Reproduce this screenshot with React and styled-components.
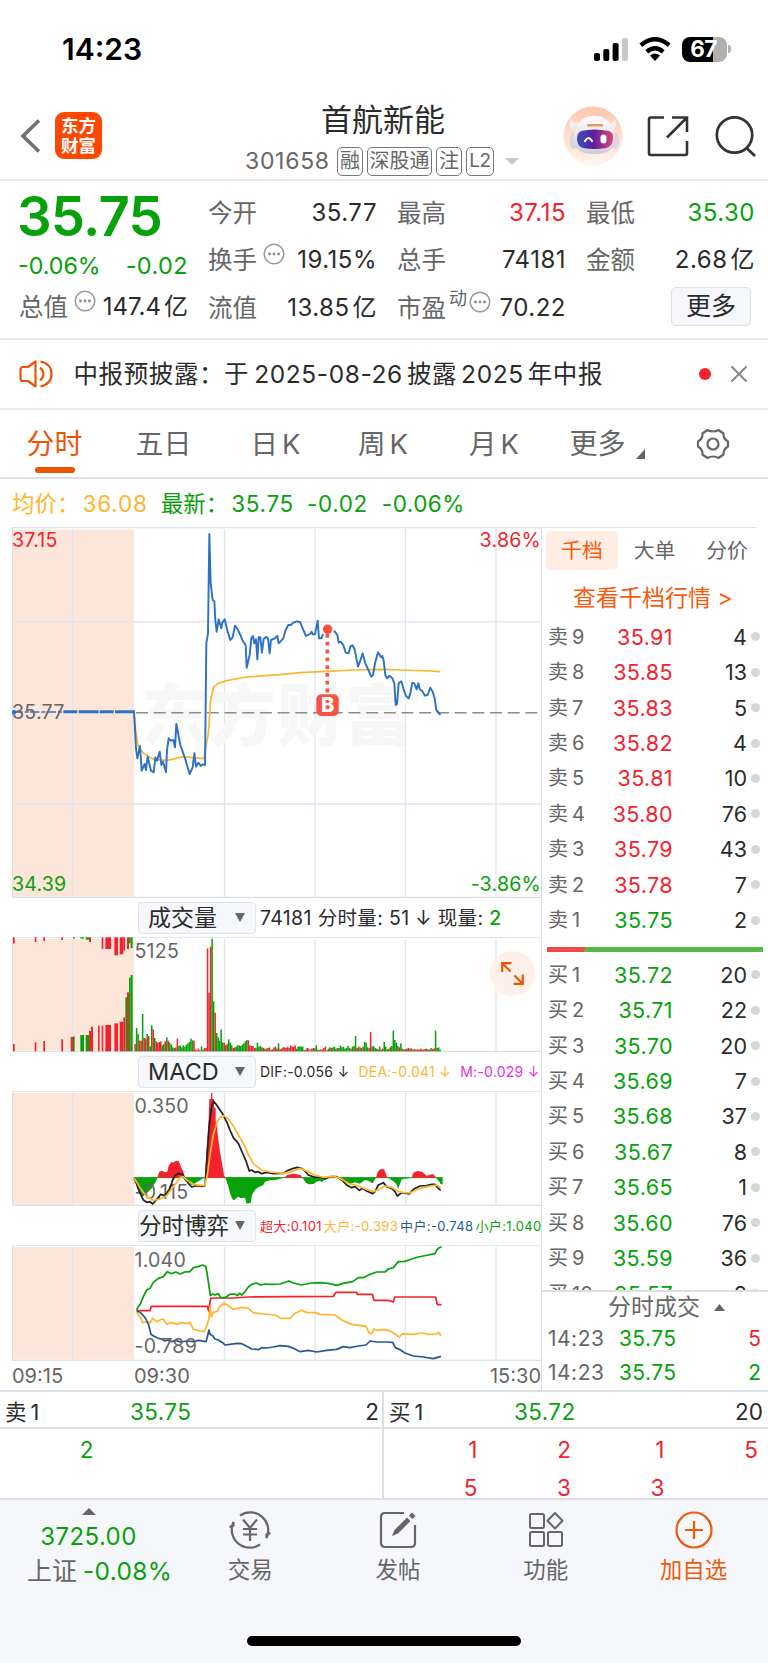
import React from "react";
import styled, { createGlobalStyle } from "styled-components";

const C = {
  red: "#f5222d",
  green: "#07a10b",
  orange: "#ea5504",
  amber: "#ffb52e",
  blue: "#2f72c4",
  navy: "#2b5797",
  text: "#2b2b2b",
  grey: "#666",
  line: "#dcdfe6",
  pink: "#fce6da",
};

const Global = createGlobalStyle`
  * { box-sizing: border-box; }
  body { margin: 0; background: #fff; color: ${C.text};
    font-family: Inter, "Noto Sans CJK SC", sans-serif; }
  svg { display: block; flex: none; }
`;

const Page = styled.div`
  width: 768px;
  height: 1663px;
  overflow: hidden;
  display: flex;
  flex-direction: column;
  background: #fff;
`;

const T = styled.span`
  font-size: ${(p) => p.$s || 24}px;
  line-height: ${(p) => p.$lh || 30}px;
  letter-spacing: ${(p) => p.$ls || 0}px;
  font-weight: ${(p) => p.$w || 400};
  color: ${(p) => p.$c || "inherit"};
  white-space: nowrap;
`;

const Num = styled.span`
  margin-left: ${(p) => p.$l ?? 5}px;
  margin-right: ${(p) => p.$r ?? 0}px;
`;

/* ---------- status bar and title ---------- */

const StatusBar = styled.div`
  height: 98px;
  flex: none;
  display: flex;
  align-items: center;
  justify-content: space-between;
  padding: 0 37px 0 62px;
`;

const StatusIcons = styled.div`
  display: flex;
  align-items: center;
  gap: 11px;
`;

const Battery = styled.div`
  display: flex;
  align-items: center;
  gap: 1px;
`;

const BatteryBody = styled.div`
  width: 45px;
  height: 25px;
  border-radius: 8px;
  background: linear-gradient(90deg, #000 68%, #b0b0b0 68%);
  color: #fff;
  display: flex;
  align-items: center;
  justify-content: center;
  padding-right: 2px;
`;

const BatteryTip = styled.div`
  width: 3px;
  height: 8px;
  border-radius: 0 4px 4px 0;
  background: #b0b0b0;
`;

const Header = styled.header`
  height: 83px;
  flex: none;
  border-bottom: 2px solid #ececef;
  display: grid;
  grid-template-columns: 245px 275px 248px;
`;

const HeaderLeft = styled.div`
  display: flex;
  align-items: center;
  padding: 0 0 6px 20px;
  gap: 14px;
`;

const AppLogo = styled.div`
  width: 47px;
  height: 47px;
  border-radius: 9px;
  background: #ff4700;
  color: #fff;
  display: flex;
  flex-direction: column;
  align-items: center;
  justify-content: center;
`;

const HeaderTitle = styled.div`
  display: flex;
  flex-direction: column;
  padding-top: 3px;
`;

const StockName = styled.div`
  height: 38px;
  display: flex;
  align-items: center;
  padding-left: 76px;
`;

const CodeRow = styled.div`
  display: flex;
  align-items: center;
  height: 40px;
  padding-top: 4px;
  gap: 4px;
`;

const Code = styled.div`
  width: 88px;
  flex: none;
`;

const Tag = styled.span`
  height: 29px;
  width: ${(p) => p.$width}px;
  flex: none;
  border: 1.5px solid #777;
  border-radius: 5px;
  color: #666;
  display: flex;
  align-items: center;
  justify-content: center;
`;

const HeaderRight = styled.div`
  display: flex;
  align-items: center;
  padding: 0 0 6px 43px;
`;

/* ---------- quote ---------- */

const Quote = styled.section`
  height: 159px;
  flex: none;
  border-bottom: 2px solid #e8e8ec;
  display: flex;
  padding-left: 19px;
`;

const PriceBlock = styled.div`
  width: 169px;
  flex: none;
  margin-right: 20px;
  display: flex;
  flex-direction: column;
`;

const BigPrice = styled.div`
  height: 69px;
  padding-top: 5px;
  margin-left: -2px;
`;

const ChangeRow = styled.div`
  height: 33px;
  display: flex;
  justify-content: space-between;
  align-items: center;
  padding-bottom: 2px;
  margin-left: -1px;
`;

const StatColumn = styled.div`
  width: 169px;
  flex: none;
  margin-right: 20px;
  padding-top: 8px;
  display: flex;
  flex-direction: column;
`;

const Stat = styled.div`
  height: ${(p) => p.$h || 47.5}px;
  display: flex;
  align-items: center;
  justify-content: space-between;
`;

const StatLabel = styled.span`
  display: flex;
  align-items: center;
  color: ${C.grey};
`;

const InfoMark = styled.svg`
  margin: 0 0 12px ${(p) => p.$l ?? 6}px;
`;

const Superscript = styled.span`
  font-size: 18px;
  line-height: 20px;
  margin: 0 0 17px 3px;
`;

const MoreButton = styled.button`
  width: 80px;
  height: 39px;
  margin: 0 4px 0 auto;
  padding: 0;
  border: 1.5px solid #dfe1e8;
  border-radius: 5px;
  background: #f6f7fa;
  color: ${C.text};
  font-family: inherit;
`;

/* ---------- notice and tabs ---------- */

const Notice = styled.section`
  height: 70px;
  flex: none;
  border-bottom: 2px solid #ececef;
  display: flex;
  align-items: center;
  padding: 0 20px 1px 19px;
`;

const NoticeText = styled.div`
  flex: 1;
  padding-left: 20.5px;
`;

const RedDot = styled.span`
  width: 12px;
  height: 12px;
  border-radius: 50%;
  background: ${C.red};
  margin-right: 19px;
`;

const Tabs = styled.nav`
  height: 69px;
  flex: none;
  border-bottom: 2px solid ${C.line};
  display: flex;
  align-items: center;
`;

const Tab = styled.div`
  position: relative;
  height: 67px;
  display: flex;
  align-items: center;
  justify-content: center;
  width: ${(p) => p.$width}px;
  color: ${(p) => (p.$active ? C.orange : C.grey)};
  &::after {
    content: "";
    display: ${(p) => (p.$active ? "block" : "none")};
    position: absolute;
    left: 35px;
    bottom: 4px;
    width: 40px;
    height: 6px;
    border-radius: 3px;
    background: ${C.orange};
  }
`;

const CornerMark = styled.svg`
  margin: 20px 0 0 10px;
`;

const AverageLine = styled.div`
  height: 48px;
  flex: none;
  display: flex;
  align-items: center;
  padding: 1px 0 0 12px;
`;

/* ---------- charts ---------- */

const Main = styled.section`
  height: 865px;
  flex: none;
  display: grid;
  grid-template-columns: 542px 226px;
  border-bottom: 2px solid ${C.line};
`;

const ChartColumn = styled.div`
  padding-left: 12px;
  border-right: 1.5px solid ${C.line};
  display: flex;
  flex-direction: column;
`;

const IndicatorBar = styled.div`
  height: 39px;
  flex: none;
  padding-left: 126px;
  display: flex;
  align-items: center;
`;

const Select = styled.div`
  width: 118px;
  height: 32px;
  flex: none;
  border: 1.5px solid #e0e2e9;
  border-radius: 4px;
  background: #f6f7fa;
  display: flex;
  align-items: center;
  justify-content: space-between;
  padding: 0 10px 0 ${(p) => p.$pad ?? 8}px;
  margin-right: 4px;
`;

const Values = styled.div`
  display: flex;
  align-items: center;
  gap: ${(p) => p.$gap || 0}px;
`;

const ChartFrame = styled.div`
  position: relative;
  height: ${(p) => p.$h}px;
  flex: none;
`;

const ExpandButton = styled.div`
  position: absolute;
  left: 478px;
  top: 13.5px;
  width: 45px;
  height: 45px;
  border-radius: 50%;
  background: #fff0e9;
  display: flex;
  align-items: center;
  justify-content: center;
`;

const TimeAxis = styled.div`
  flex: 1;
  display: grid;
  grid-template-columns: 122px 1fr auto;
  align-items: center;
  color: ${C.grey};
`;

/* ---------- order book ---------- */

const Book = styled.aside`
  display: flex;
  flex-direction: column;
`;

const BookTabs = styled.div`
  height: 49px;
  flex: none;
  margin-right: 12px;
  border-top: 1.5px solid ${C.line};
  display: flex;
  padding: 3px 0 0 4px;
`;

const BookTab = styled.div`
  width: ${(p) => p.$width}px;
  height: 39px;
  flex: none;
  border-radius: 5px;
  display: flex;
  align-items: center;
  justify-content: center;
  background: ${(p) => (p.$active ? "#ffede4" : "transparent")};
  color: ${(p) => (p.$active ? "#fb5a0b" : C.grey)};
`;

const DepthLink = styled.div`
  height: 43px;
  flex: none;
  display: flex;
  align-items: center;
  padding-left: 31px;
  color: #fb5a0b;
`;

const Levels = styled.div`
  height: ${(p) => p.$h}px;
  flex: none;
  overflow: hidden;
`;

const Level = styled.div`
  height: 35.45px;
  display: grid;
  grid-template-columns: 54px 67px 1fr 9px;
  column-gap: 4px;
  align-items: center;
  padding: 0 8px 0 6px;
`;

const Right = styled.span`
  text-align: right;
  display: flex;
  justify-content: flex-end;
`;

const Dot = styled.span`
  width: 9px;
  height: 9px;
  border-radius: 50%;
  background: #d3d6dd;
`;

const RatioBar = styled.div`
  height: 5px;
  flex: none;
  margin: 0 5px 5px 5px;
  background: linear-gradient(120deg, #ee4a4a 34px, #57b946 34px);
`;

const TradesTitle = styled.div`
  height: 32px;
  flex: none;
  border-top: 2px solid ${C.line};
  display: flex;
  align-items: center;
  padding-left: 66px;
  gap: 14px;
  color: ${C.grey};
`;

const Trade = styled.div`
  height: 34px;
  flex: none;
  display: grid;
  grid-template-columns: 71px 71px 1fr;
  padding: 0 7px 0 6px;
  align-items: center;
`;

/* ---------- queue ---------- */

const BestRow = styled.div`
  height: 37px;
  flex: none;
  display: grid;
  grid-template-columns: 384px 384px;
  border-bottom: 2px solid ${C.line};
`;

const Best = styled.div`
  display: grid;
  grid-template-columns: 125px 1fr auto;
  align-items: center;
  padding: 4px ${(p) => (p.$last ? 5 : 3)}px 0 5px;
  border-right: ${(p) => (p.$last ? "0" : `2px solid ${C.line}`)};
`;

const Queue = styled.div`
  height: 71px;
  flex: none;
  display: grid;
  grid-template-columns: 384px 384px;
  border-bottom: 2px solid ${C.line};
`;

const QueueSide = styled.div`
  display: grid;
  grid-template-columns: repeat(4, 93.5px);
  grid-template-rows: 38px 38px;
  align-items: center;
  padding-top: 2px;
  border-right: ${(p) => (p.$last ? "0" : `2px solid ${C.line}`)};
  overflow: hidden;
  text-align: right;
`;

/* ---------- bottom bar ---------- */

const BottomBar = styled.footer`
  flex: 1;
  background: #f6f7fa;
  display: flex;
  flex-direction: column;
  align-items: center;
`;

const BottomItems = styled.div`
  width: 768px;
  height: 136px;
  display: grid;
  grid-template-columns: 177px repeat(4, 147.75px);
`;

const IndexCell = styled.div`
  display: flex;
  flex-direction: column;
  align-items: center;
  padding-top: 8px;
`;

const IndexValue = styled.div`
  height: 38px;
  margin-top: 3px;
  display: flex;
  align-items: center;
`;

const IndexChange = styled.div`
  display: flex;
  align-items: center;
  gap: 6px;
  padding-left: 22px;
`;

const Action = styled.div`
  display: flex;
  flex-direction: column;
  align-items: center;
  padding: 8px 1px 0 0;
  gap: 3px;
  color: ${(p) => (p.$hot ? "#f05a0a" : C.grey)};
`;

const HomeIndicator = styled.div`
  width: 274px;
  height: 10px;
  border-radius: 5px;
  background: #000;
`;

/* ---------- chart data, in thirds of a pixel ---------- */

const PRICE =
  "402,574 404,610 408,685 412,715 420,678 425,752 434,732 438,750 443,710 453,752 461,757 466,712 471,722 479,695 484,735 489,725 498,757 501,690 506,655 512,662 520,660 525,682 529,612 541,675 555,715 569,762 578,742 583,700 588,740 595,728 602,738 608,733 615,735 619,370 624,340 628,42 632,190 638,240 643,243 646,300 650,335 656,298 664,325 667,308 674,298 683,335 691,360 698,352 705,317 714,330 721,345 728,362 737,375 740,443 749,405 754,355 759,348 763,370 768,358 772,418 776,352 781,352 786,398 791,357 799,350 804,355 809,400 813,360 824,355 832,348 836,370 850,355 857,330 865,315 872,315 880,308 890,304 900,306 908,325 918,348 930,342 935,335 938,343 945,343 953,302 957,355 964,355 969,342";
const PRICE_AFTER =
  "1002,332 1012,345 1016,368 1022,365 1030,375 1037,398 1046,400 1051,380 1057,376 1064,388 1074,440 1080,425 1088,400 1096,430 1105,450 1114,470 1119,465 1125,430 1134,397 1143,412 1147,408 1151,422 1156,465 1161,475 1168,467 1177,475 1183,490 1187,555 1191,552 1196,490 1204,484 1210,505 1218,528 1226,535 1231,520 1237,488 1243,490 1250,508 1255,490 1259,507 1266,512 1275,527 1283,525 1291,503 1298,515 1304,535 1309,570 1316,578 1321,585";
const AVERAGE =
  "402,580 408,640 414,678 430,700 460,718 500,721 525,716 550,710 580,713 612,716 618,680 625,640 632,540 640,502 655,490 680,482 740,471 840,464 900,458 980,454 1060,450 1150,448 1200,450 1290,453 1321,455";

const VOLUME =
  "r22 g70 g52 r32 r32 g112 r40 r38 g52 r46 g15 g78 r66 g40 r30 r26 r28 r30 g18 g22 r30 g42 r32 g26 g20 g12 r10 g12 r38 g16 g18 g12 g18 g14 g20 g24 g28 g38 g33 r32 r6 r3 r8 g3 g15 g5 r10 r10 r309 r176 r314 g338 g150 r116 g55 g42 g32 g66 g26 r26 g18 r22 g36 g26 g18 r10 r12 g14 g18 g18 g16 g20 g24 g30 g34 r33 r18 r16 r16 r10 g10 g26 g14 g16 g12 r10 r8 g8 r10 r12 g5 g6 r12 r14 g8 g24 r6 r8 r12 r12 r10 r14 g10 r18 r14 r14 r18 g8 g14 g15 g14 g14 r4 g5 r10 r8 g3 r8 r10 g9 g18 r5 g4 r6 r5 r10 r14 g3 g8 g12 r10 g12 g14 g8 r10 g10 g18 g12 g14 g8 g10 g16 g10 r8 g14 g16 g46 r10 r14 g12 g10 r14 g28 g26 g12 r10 r58 g14 g16 g10 r8 g6 g14 r5 r8 g28 g14 g6 g8 r12 g16 g62 g34 g26 g16 r12 g24 g8 r6 g6 r8 r10 g8 r9 r5 g7 r5 r6 g5 r8 r6 r5 g7 r8 r6 g5 g10 r7 r9 g62 g10 g12 g5"
    .split(" ")
    .map((v) => ({ up: v[0] === "r", h: Number(v.slice(1)) }));

/* [x, width, height from the base, hanging height, rising] */
const AUCTION = [
  [39, 5, 22, 19, 1], [104, 5, 27, 14, 1], [130, 5, 31, 11, 1], [184, 5, 36, 8, 1],
  [212, 7, 43, 0, 1], [219, 5, 45, 4, 0], [241, 11, 49, 4, 0], [257, 10, 49, 7, 0],
  [267, 6, 61, 14, 1], [273, 6, 74, 0, 1], [294, 5, 77, 0, 1], [305, 5, 77, 35, 1],
  [316, 17, 79, 35, 1], [343, 11, 84, 54, 1], [359, 11, 89, 51, 1], [370, 5, 102, 40, 1],
  [376, 5, 162, 0, 0], [381, 6, 177, 35, 1], [387, 5, 221, 18, 0], [392, 6, 229, 33, 0],
];

const MACD_UP = [
  "472,158 478,140 485,137 495,142 502,140 506,122 515,110 520,113 528,107 536,108 543,125 550,140 555,158",
  "614,158 618,100 622,40 626,-20 628,-78 633,-78 633,-96 637,-96 637,-78 642,-78 642,-52 647,-52 647,-8 651,-8 652,20 656,50 660,80 666,115 672,150 676,158",
  "852,158 862,150 880,146 900,149 908,158",
  "1128,158 1133,142 1140,133 1152,133 1157,145 1162,158",
  "1235,158 1240,143 1252,138 1266,140 1280,152 1298,147 1310,158",
];
const MACD_DOWN = [
  "402,158 410,180 418,200 428,215 440,205 455,190 470,165 472,158",
  "555,158 565,172 575,180 590,172 605,163 612,158",
  "676,158 684,180 690,205 697,222 702,226 710,218 716,215 722,220 735,218 740,236 752,234 756,210 765,195 772,188 790,180 795,170 810,166 830,164 850,158",
  "908,158 916,172 925,178 940,177 950,170 960,167 965,172 975,163 985,158",
  "1020,158 1035,170 1050,178 1065,172 1080,176 1095,165 1105,167 1118,175 1125,162 1128,158",
  "1165,158 1182,170 1190,178 1194,192 1199,180 1205,163 1235,158",
  "1308,158 1318,170 1322,178 1328,178 1328,158",
];
const DIF =
  "402,158 408,172 418,200 430,225 440,232 450,230 458,237 466,228 475,218 482,208 492,212 500,205 510,190 518,165 525,152 535,145 548,148 555,162 565,175 575,186 590,182 605,184 614,183 617,160 622,80 628,0 634,-50 641,-71 650,-60 660,-45 670,-30 682,-5 690,15 700,38 715,55 725,78 738,108 748,138 755,135 765,142 775,140 785,146 800,142 820,146 840,145 852,145 860,138 880,130 892,127 905,130 915,138 925,150 945,157 960,156 975,162 990,155 1010,155 1025,165 1040,180 1055,188 1065,185 1078,196 1088,190 1100,198 1118,206 1125,200 1135,180 1150,173 1160,185 1175,190 1185,200 1192,213 1205,203 1228,207 1240,193 1260,183 1280,182 1295,178 1305,178 1315,190 1322,196";
const DEA =
  "402,158 420,188 440,215 460,226 480,222 500,212 520,185 540,158 550,155 560,165 580,178 600,181 614,181 622,150 630,90 640,30 650,-5 660,-23 672,-28 685,-18 700,3 715,30 735,65 748,95 762,118 785,135 810,141 850,145 875,140 900,130 925,140 945,150 970,157 1000,154 1020,160 1045,175 1075,183 1100,193 1120,200 1140,192 1155,183 1175,187 1195,200 1210,203 1230,204 1260,190 1285,184 1310,180 1322,188";

const FLOWS = [
  [C.red, "410,557 450,557 454,544 622,544 626,558 632,520 640,519 700,519 745,516 1000,514 1008,502 1070,502 1072,508 1117,508 1122,526 1165,526 1180,531 1184,516 1307,516 1312,539 1325,539"],
  [C.amber, "410,560 416,572 422,578 428,594 440,590 450,594 458,580 470,590 480,585 490,582 500,598 515,592 530,598 545,592 560,596 570,592 580,613 600,618 612,620 620,605 627,580 630,545 634,575 640,562 650,560 660,545 673,534 685,543 700,553 725,547 745,550 760,563 790,567 825,570 842,580 870,580 885,565 905,556 920,562 945,563 960,568 1005,570 1025,585 1055,598 1098,604 1108,625 1115,626 1122,612 1130,616 1155,614 1175,620 1198,636 1208,626 1240,628 1265,624 1285,628 1310,627 1315,622 1323,632"],
  [C.navy, "410,557 420,562 430,572 438,582 446,600 453,628 462,634 475,640 485,642 495,648 505,645 515,650 528,646 540,651 560,648 580,650 595,646 618,650 622,635 627,615 630,628 638,632 645,642 655,645 668,653 675,660 690,658 710,655 725,656 740,664 755,672 775,674 785,668 800,669 820,666 840,662 865,664 885,672 900,680 925,676 950,681 980,676 1010,673 1030,665 1050,668 1075,663 1098,660 1110,648 1130,651 1155,651 1178,652 1186,668 1200,674 1215,684 1240,693 1270,696 1300,701 1323,694"],
  [C.green, "410,555 415,545 422,535 430,515 440,495 450,490 460,472 475,460 490,455 502,440 515,446 528,441 540,447 555,441 570,440 580,428 595,425 608,420 617,424 622,450 628,490 631,512 638,507 645,510 655,506 662,518 675,518 690,508 705,507 712,512 718,505 726,510 735,500 745,486 755,478 770,474 782,480 795,477 815,478 840,477 867,468 880,474 905,480 935,474 960,473 985,475 1010,481 1030,475 1058,470 1075,458 1090,458 1110,448 1130,441 1155,441 1165,432 1180,428 1195,410 1215,409 1235,402 1255,396 1285,390 1305,386 1310,375 1318,368 1325,366"],
];

function Grid({ top, bottom }) {
  return (
    <g>
      <rect x="12" y={top + 2.5} width="122" height={bottom - top - 4} fill={C.pink} />
      <path
        d={`M72.7 ${top + 2}V${bottom}M224.5 ${top + 2}V${bottom}M315 ${top + 2}V${bottom}M405.5 ${top + 2}V${bottom}M496 ${top + 2}V${bottom}`}
        stroke="#e1e5ee"
        strokeWidth="1.3"
      />
      <path d={`M12.5 ${bottom - 0.7}V${top + 0.7}H542M12.5 ${bottom - 0.7}H542`} fill="none" stroke={C.line} strokeWidth="1.3" />
    </g>
  );
}

const Line = ({ points, color, w = 5.2 }) => (
  <polyline points={points} fill="none" stroke={color} strokeWidth={w} strokeLinejoin="round" />
);

const ChartText = styled.text`
  font-size: 19.6px;
  letter-spacing: 0.2px;
`;

function PriceChart() {
  return (
    <ChartFrame $h={371}>
      <svg width="530" height="371" viewBox="12 527 530 371">
        <Grid top={527} bottom={898} />
        <path d="M12 621.7H542M12 804H542" stroke="#e1e5ee" strokeWidth="1.5" />
        <text x="141" y="740" fontSize="67" fontWeight="900" letterSpacing="1" fill="#f7f7f7">东方财富</text>
        <path d="M136 712.7H541" stroke="#8c8c8c" strokeWidth="1.6" strokeDasharray="12 5.7" />
        <g transform="translate(0 520) scale(.33333)">
          <circle cx="42" cy="577" r="7" fill={C.blue} />
          <path d="M40 576H190" stroke={C.blue} strokeWidth="5" strokeDasharray="28 6 12 4" />
          <path d="M190 575H404" stroke={C.blue} strokeWidth="9" strokeDasharray="42 4 60 3" />
          <Line points={AVERAGE} color={C.amber} />
          <Line points={PRICE} color={C.blue} w={5.8} />
          <Line points={PRICE_AFTER} color={C.blue} w={5.8} />
        </g>
        <path d="M327.3 634V694" stroke="#fa5343" strokeWidth="3.6" strokeDasharray="3.8 4" />
        <circle cx="327.6" cy="629.3" r="4.7" fill="#fa4a3c" />
        <rect x="316.3" y="694.3" width="22.4" height="21.6" rx="5" fill="#fa5343" />
        <text x="327.6" y="712.3" fontSize="20" fontWeight="800" fill="#fff" textAnchor="middle">B</text>
        <ChartText x="12" y="547.3" fill={C.red}>37.15</ChartText>
        <ChartText x="12" y="719.3" fill={C.grey}>35.77</ChartText>
        <ChartText x="12" y="890.7" fill={C.green}>34.39</ChartText>
        <ChartText x="541" y="547.3" fill={C.red} textAnchor="end">3.86%</ChartText>
        <ChartText x="541" y="890.7" fill={C.green} textAnchor="end">-3.86%</ChartText>
      </svg>
    </ChartFrame>
  );
}

function VolumeChart() {
  return (
    <ChartFrame $h={115}>
      <svg width="530" height="115" viewBox="12 937 530 115">
        <Grid top={936.5} bottom={1052} />
        <g transform="translate(0 895) scale(.33333)">
          {AUCTION.map(([x, w, h, top, up]) => (
            <g key={x} fill={up ? C.red : C.green}>
              <rect x={x} y={469 - h} width={w} height={h} />
              <rect x={x} y={127} width={w} height={top} />
            </g>
          ))}
          {VOLUME.map((v, i) => (
            <rect key={i} x={403 + i * 4.53} y={469 - v.h} width="4.6" height={v.h} fill={v.up ? C.red : C.green} />
          ))}
        </g>
        <ChartText x="134.5" y="958.3" fill={C.grey}>5125</ChartText>
      </svg>
      <ExpandButton>
        <svg width="23" height="23" viewBox="0 0 23 23" fill="none" stroke={C.orange} strokeWidth="2.2">
          <path d="M1.200 10V1.200H10.500M1.500 1.500L9.500 9.500M21.800 12.500V21.800H12.500M21.500 21.500L13.500 13.500" />
        </svg>
      </ExpandButton>
    </ChartFrame>
  );
}

function MacdChart() {
  return (
    <ChartFrame $h={115}>
      <svg width="530" height="115" viewBox="12 1091 530 115">
        <Grid top={1090.5} bottom={1206} />
        <g transform="translate(0 1125) scale(.33333)">
          <path d="M402 158H1328" stroke={C.green} strokeWidth="3" />
          {MACD_UP.map((p) => <polygon key={p} points={p} fill={C.red} />)}
          {MACD_DOWN.map((p) => <polygon key={p} points={p} fill={C.green} />)}
        </g>
        <ChartText x="134.5" y="1112.5" fill={C.grey}>0.350</ChartText>
        <ChartText x="134.5" y="1198.5" fill={C.grey}>-0.115</ChartText>
        <g transform="translate(0 1125) scale(.33333)">
          <Line points={DIF} color="#222" />
          <Line points={DEA} color={C.amber} />
        </g>
      </svg>
    </ChartFrame>
  );
}

function FlowChart() {
  return (
    <ChartFrame $h={116}>
      <svg width="530" height="116" viewBox="12 1245 530 116">
        <Grid top={1244.5} bottom={1361} />
        <g transform="translate(0 1125) scale(.33333)">
          {FLOWS.map(([color, points]) => <Line key={color} points={points} color={color} />)}
        </g>
        <ChartText x="134.5" y="1266.5" fill={C.grey}>1.040</ChartText>
        <ChartText x="134.5" y="1353.3" fill={C.grey}>-0.789</ChartText>
      </svg>
    </ChartFrame>
  );
}

const Caret = ({ up, w = 10, h = 9, color = C.grey }) => (
  <svg width={w} height={h} viewBox="0 0 10 10" preserveAspectRatio="none">
    <path d={up ? "M5 0L10 10H0Z" : "M0 0H10L5 10Z"} fill={color} />
  </svg>
);

const Info = ({ l }) => (
  <InfoMark $l={l} width="22" height="22" viewBox="0 0 22 22">
    <circle cx="11" cy="11" r="9.8" fill="none" stroke="#999" strokeWidth="1.5" />
    <g fill="#888">
      <circle cx="6.5" cy="11" r="1.4" />
      <circle cx="11" cy="11" r="1.4" />
      <circle cx="15.5" cy="11" r="1.4" />
    </g>
  </InfoMark>
);

const SELLS = [
  ["9", "35.91", "4"], ["8", "35.85", "13"], ["7", "35.83", "5"], ["6", "35.82", "4"], ["5", "35.81", "10"],
  ["4", "35.80", "76"], ["3", "35.79", "43"], ["2", "35.78", "7"], ["1", "35.75", "2"],
];
const BUYS = [
  ["1", "35.72", "20"], ["2", "35.71", "22"], ["3", "35.70", "20"], ["4", "35.69", "7"], ["5", "35.68", "37"],
  ["6", "35.67", "8"], ["7", "35.65", "1"], ["8", "35.60", "76"], ["9", "35.59", "36"], ["10", "35.57", "8"],
];

function LevelRow({ side, row: [n, price, qty] }) {
  const up = Number(price) > 35.77;
  return (
    <Level>
      <T $s={20} $c={C.grey}>{side}<Num $l={4}>{n}</Num></T>
      <Right><T $s={21.5} $ls={0.4} $c={up ? C.red : C.green}>{price}</T></Right>
      <Right><T $s={21.5}>{qty}</T></Right>
      <Dot />
    </Level>
  );
}

function StatItem({ label, mark, extra, value, color, ls = 0.5 }) {
  return (
    <Stat>
      <StatLabel>
        <T $s={24.5}>{label}</T>
        {extra && <Superscript>{extra}</Superscript>}
        {mark && <Info l={extra ? 2 : 6} />}
      </StatLabel>
      <T $s={24} $ls={ls} $c={color}>{value}</T>
    </Stat>
  );
}

const Robot = () => (
  <svg width="60" height="60" viewBox="0 0 60 60">
    <defs>
      <linearGradient id="halo" x1="0" y1="0" x2="0" y2="1">
        <stop offset="0" stopColor="#fdc7ae" />
        <stop offset="1" stopColor="#fff5ef" />
      </linearGradient>
      <linearGradient id="visor" x1="0" y1="0" x2="1" y2="0">
        <stop offset="0" stopColor="#3a4fc0" />
        <stop offset=".45" stopColor="#5a1f9c" />
        <stop offset="1" stopColor="#e0457a" />
      </linearGradient>
      <linearGradient id="shell" x1="0" y1="0" x2="0" y2="1">
        <stop offset="0" stopColor="#fff" />
        <stop offset="1" stopColor="#cfcdd6" />
      </linearGradient>
    </defs>
    <circle cx="30" cy="30" r="29.5" fill="url(#halo)" />
    <path d="M9 24Q5 19 8 13Q11 17 17 17ZM50 24Q55 20 52 14Q49 18 43 18Z" fill="#f1eef1" />
    <ellipse cx="11" cy="35" rx="4.500" ry="8" fill="#d9d6df" />
    <ellipse cx="52" cy="35" rx="4" ry="8" fill="#d9d6df" />
    <path d="M31 10C43 10 51 18 52 31C53 42 47 48 32 48C16 48 10 43 11 31C12 18 19 10 31 10Z" fill="url(#shell)" />
    <rect x="24" y="18" width="16" height="2.6" rx="1.300" fill="#e9975c" />
    <path d="M18 25Q31 22 46 25Q51 27 50 33Q49 41 43 42Q31 44 20 42Q14 40 14 33Q14 27 18 25Z" fill="url(#visor)" />
    <path d="M22 35Q25.500 29 29 35" stroke="#fff" strokeWidth="2.200" fill="none" strokeLinecap="round" />
    <rect x="37.500" y="28.500" width="6" height="9" rx="3" fill="#fff" />
  </svg>
);

export default function App() {
  return (
    <Page>
      <Global />
      <StatusBar>
        <T $s={30} $w={600} $c="#000">14:23</T>
        <StatusIcons>
          <svg width="34" height="24" viewBox="0 0 34 24">
            <rect x="0" y="16" width="6" height="8" rx="2" />
            <rect x="9.3" y="12" width="6" height="12" rx="2" />
            <rect x="18.6" y="6" width="6" height="18" rx="2" />
            <rect x="28" y="1" width="6" height="23" rx="2" fill="#c8c8c8" />
          </svg>
          <svg width="32" height="24" viewBox="0 0 32 24">
            <path d="M16 24L11 18.500Q16 14.500 21 18.500Z" />
            <path d="M7.800 14.800Q16 7.800 24.200 14.800M1.800 8.200Q16 -3.800 30.200 8.200" fill="none" stroke="#000" strokeWidth="4.400" />
          </svg>
          <Battery>
            <BatteryBody><T $s={22.5} $w={700} $ls={-0.5}>67</T></BatteryBody>
            <BatteryTip />
          </Battery>
        </StatusIcons>
      </StatusBar>

      <Header>
        <HeaderLeft>
          <svg width="21" height="34" viewBox="0 0 21 34" fill="none" stroke="#707070" strokeWidth="3.600">
            <path d="M19 1.500L3 17L19 32.500" />
          </svg>
          <AppLogo>
            <T $s={17.5} $lh={20} $w={700}>东方</T>
            <T $s={17.5} $lh={20} $w={700}>财富</T>
          </AppLogo>
        </HeaderLeft>
        <HeaderTitle>
          <StockName><T $s={31}>首航新能</T></StockName>
          <CodeRow>
            <Code><T $s={23} $c={C.grey} $ls={0.7}>301658</T></Code>
            <Tag $width={26}><T $s={20}>融</T></Tag>
            <Tag $width={65}><T $s={20}>深股通</T></Tag>
            <Tag $width={26}><T $s={20}>注</T></Tag>
            <Tag $width={28}><T $s={19} $ls={-0.5}>L2</T></Tag>
            <Num $l={7}><Caret w={14} h={7} color="#c8c8c8" /></Num>
          </CodeRow>
        </HeaderTitle>
        <HeaderRight>
          <Robot />
          <Num $l={24} $r={26}>
            <svg width="42" height="42" viewBox="0 0 42 42" fill="none" stroke="#333" strokeWidth="2.600">
              <path d="M17 2.500H4Q2 2.500 2 4.500V38Q2 40 4 40H38Q40 40 40 38V26M25 2.500H40V17M40 2.500L20 22.500" />
            </svg>
          </Num>
          <svg width="42" height="42" viewBox="0 0 42 42" fill="none" stroke="#333" strokeWidth="2.700">
            <circle cx="19.5" cy="20" r="17.7" />
            <path d="M31.500 33L40 41" />
          </svg>
        </HeaderRight>
      </Header>

      <Quote>
        <PriceBlock>
          <BigPrice><T $s={54.5} $lh={60} $w={600} $ls={-0.8} $c={C.green}>35.75</T></BigPrice>
          <ChangeRow>
            <T $s={23.2} $c={C.green}>-0.06%</T>
            <T $s={23.5} $ls={0.4} $c={C.green}>-0.02</T>
          </ChangeRow>
          <StatItem label="总值" mark ls={0} value={<>147.4<Num $l={3}>亿</Num></>} />
        </PriceBlock>
        <StatColumn>
          <StatItem label="今开" value="35.77" />
          <StatItem label="换手" mark value="19.15%" />
          <StatItem label="流值" value={<>13.85<Num $l={3}>亿</Num></>} />
        </StatColumn>
        <StatColumn>
          <StatItem label="最高" value="37.15" color={C.red} />
          <StatItem label="总手" value="74181" />
          <StatItem label="市盈" extra="动" mark value="70.22" />
        </StatColumn>
        <StatColumn>
          <StatItem label="最低" value="35.30" color={C.green} />
          <StatItem label="金额" value={<>2.68<Num $l={3}>亿</Num></>} />
          <Stat $h={44}><MoreButton><T $s={25}>更多</T></MoreButton></Stat>
        </StatColumn>
      </Quote>

      <Notice>
        <svg width="34" height="30" viewBox="0 0 34 30" fill="none" stroke={C.orange} strokeWidth="2.200">
          <path d="M16.500 2.500V27.500L9 22H4Q1.500 22 1.500 19.500V10.500Q1.500 8 4 8H9Z" strokeLinejoin="round" />
          <path d="M21 8.500Q28 15 21 21.500M21.500 2.500Q32.500 5 32.500 15Q32.500 25 21.500 27.500" />
        </svg>
        <NoticeText>
          <T $s={24.5} $ls={0.6}>中报预披露：于<Num $r={4}>2025-08-26</Num>披露<Num $l={4} $r={4}>2025</Num>年中报</T>
        </NoticeText>
        <RedDot />
        <svg width="18" height="18" viewBox="0 0 18 18" stroke="#888" strokeWidth="2">
          <path d="M1.500 1.500L16.500 16.500M16.500 1.500L1.500 16.500" />
        </svg>
      </Notice>

      <Tabs>
        <Tab $width={109} $active><T $s={28}>分时</T></Tab>
        <Tab $width={109}><T $s={28}>五日</T></Tab>
        <Tab $width={115}><T $s={27.5}>日<Num $l={4}>K</Num></T></Tab>
        <Tab $width={100}><T $s={27.5}>周<Num $l={4}>K</Num></T></Tab>
        <Tab $width={122}><T $s={27.5}>月<Num $l={4}>K</Num></T></Tab>
        <Tab $width={104}>
          <T $s={28}>更多</T>
          <CornerMark width="9" height="10" viewBox="0 0 9 10"><path d="M9 0V10H0Z" fill={C.grey} /></CornerMark>
        </Tab>
        <Tab $width={108}>
          <svg width="34" height="32" viewBox="0 0 34 32" fill="none" stroke={C.grey} strokeWidth="2.200" strokeLinejoin="round">
            <path d="M11.500 2Q17 5 22.500 2L27.500 5.500Q27 10.500 32 13.500V18.500Q27 21.500 27.500 26.500L22.500 30Q17 27 11.500 30L6.500 26.500Q7 21.500 2 18.500V13.500Q7 10.500 6.500 5.500Z" />
            <circle cx="17" cy="16" r="5.500" />
          </svg>
        </Tab>
      </Tabs>

      <AverageLine>
        <T $s={22.5} $c={C.amber}>均价：</T>
        <T $s={22.5} $c={C.amber} $ls={0.8}><Num $l={3}>36.08</Num></T>
        <T $s={22.5} $c={C.green}><Num $l={13}>最新：</Num></T>
        <T $s={22.5} $c={C.green} $ls={0.7}><Num $l={3}>35.75</Num></T>
        <T $s={22.5} $c={C.green} $ls={0.6}><Num $l={13}>-0.02</Num></T>
        <T $s={22.5} $c={C.green} $ls={0.5}><Num $l={14}>-0.06%</Num></T>
      </AverageLine>

      <Main>
        <ChartColumn>
          <PriceChart />
          <IndicatorBar>
            <Select $pad={9}><T $s={23}>成交量</T><Caret /></Select>
            <Values>
              <T $s={19.5} $ls={0.35}>74181 分时量: 51 ↓ 现量: <T as="b" $s={19.5} $w={500} $c={C.green}>2</T></T>
            </Values>
          </IndicatorBar>
          <VolumeChart />
          <IndicatorBar>
            <Select $pad={9}><T $s={23.5}>MACD</T><Caret /></Select>
            <Values $gap={9}>
              <T $s={14} $ls={0.25}>DIF:-0.056 ↓</T>
              <T $s={14} $ls={0.25} $c={C.amber}>DEA:-0.041 ↓</T>
              <T $s={14} $ls={0.25} $c="#e332e3">M:-0.029 ↓</T>
            </Values>
          </IndicatorBar>
          <MacdChart />
          <IndicatorBar>
            <Select $pad={0}><T $s={22.5}>分时博弈</T><Caret /></Select>
            <Values $gap={2}>
              <T $s={13} $ls={0.35} $c={C.red}>超大:0.101</T>
              <T $s={13} $ls={0.35} $c={C.amber}>大户:-0.393</T>
              <T $s={13} $ls={0.35} $c={C.navy}>中户:-0.748</T>
              <T $s={13} $ls={0.35} $c={C.green}>小户:1.040</T>
            </Values>
          </IndicatorBar>
          <FlowChart />
          <TimeAxis>
            <T $s={20}>09:15</T>
            <T $s={20}>09:30</T>
            <T $s={20}>15:30</T>
          </TimeAxis>
        </ChartColumn>

        <Book>
          <BookTabs>
            <BookTab $width={72} $active><T $s={20.8}>千档</T></BookTab>
            <BookTab $width={73}><T $s={20.8}>大单</T></BookTab>
            <BookTab $width={72}><T $s={20.8}>分价</T></BookTab>
          </BookTabs>
          <DepthLink><T $s={23}>查看千档行情 &gt;</T></DepthLink>
          <Levels $h={328}>
            {SELLS.map((r) => <LevelRow key={r[0]} side="卖" row={r} />)}
          </Levels>
          <RatioBar />
          <Levels $h={333}>
            {BUYS.map((r) => <LevelRow key={r[0]} side="买" row={r} />)}
          </Levels>
          <TradesTitle><T $s={23}>分时成交</T><Caret up w={11} h={7} /></TradesTitle>
          <Trade>
            <T $s={21} $ls={0.5} $c={C.grey}>14:23</T>
            <T $s={21} $ls={0.4} $c={C.green}>35.75</T>
            <Right><T $s={21} $c={C.red}>5</T></Right>
          </Trade>
          <Trade>
            <T $s={21} $ls={0.5} $c={C.grey}>14:23</T>
            <T $s={21} $ls={0.4} $c={C.green}>35.75</T>
            <Right><T $s={21} $c={C.green}>2</T></Right>
          </Trade>
        </Book>
      </Main>

      <BestRow>
        <Best>
          <T $s={21.5}>卖<Num $l={4}>1</Num></T>
          <T $s={22.5} $ls={0.4} $c={C.green}>35.75</T>
          <T $s={22.5}>2</T>
        </Best>
        <Best $last>
          <T $s={21.5}>买<Num $l={4}>1</Num></T>
          <T $s={22.5} $ls={0.4} $c={C.green}>35.72</T>
          <T $s={22.5}>20</T>
        </Best>
      </BestRow>
      <Queue>
        <QueueSide>
          <T $s={22.5} $c={C.green}>2</T>
        </QueueSide>
        <QueueSide $last>
          {["1", "2", "1", "5", "5", "3", "3"].map((n, i) => (
            <T key={i} $s={22.5} $c={C.red}>{n}</T>
          ))}
        </QueueSide>
      </Queue>

      <BottomBar>
        <BottomItems>
          <IndexCell>
            <Caret up w={14} h={7} />
            <IndexValue><T $s={24} $ls={0.4} $c={C.green}>3725.00</T></IndexValue>
            <IndexChange><T $s={25} $c={C.grey}>上证</T><T $s={24.5} $ls={0.3} $c={C.green}>-0.08%</T></IndexChange>
          </IndexCell>
          <Action>
            <svg width="44" height="44" viewBox="0 0 44 44" fill="none" stroke="currentColor" strokeWidth="2.200">
              <path d="M12 7.500A18 18 0 0 1 38.500 30V26.500L42.500 25M32 36.500A18 18 0 0 1 5.500 14V17.500L1.500 19" />
              <path d="M15 11.500L22 20L29 11.500M22 20V33M15 21H29M15 26.500H29" />
            </svg>
            <T $s={22.5}>交易</T>
          </Action>
          <Action>
            <svg width="44" height="44" viewBox="0 0 44 44" fill="none" stroke="currentColor" strokeWidth="2.200">
              <path d="M28 5H9Q5 5 5 9V35Q5 39 9 39H35Q39 39 39 35V17" />
              <path d="M16 28L18.500 22L31 9.500L34.500 13L22 25.500Z M33 7.500L36 4.500L39.500 8L36.500 11Z" fill="currentColor" stroke="none" />
            </svg>
            <T $s={22.5}>发帖</T>
          </Action>
          <Action>
            <svg width="44" height="44" viewBox="0 0 44 44" fill="none" stroke="currentColor" strokeWidth="2">
              <rect x="6" y="6" width="14" height="14" rx="1.500" />
              <rect x="6" y="24" width="14" height="14" rx="1.500" />
              <rect x="24" y="24" width="14" height="14" rx="1.500" />
              <path d="M31 5L38.500 12.800L31 20.500L23.500 12.800Z" strokeLinejoin="round" />
            </svg>
            <T $s={22.5}>功能</T>
          </Action>
          <Action $hot>
            <svg width="44" height="44" viewBox="0 0 44 44" fill="none" stroke="currentColor" strokeWidth="2.200">
              <circle cx="22" cy="22" r="17.5" />
              <path d="M13 22H31M22 13V31" />
            </svg>
            <T $s={22.5}>加自选</T>
          </Action>
        </BottomItems>
        <HomeIndicator />
      </BottomBar>
    </Page>
  );
}
